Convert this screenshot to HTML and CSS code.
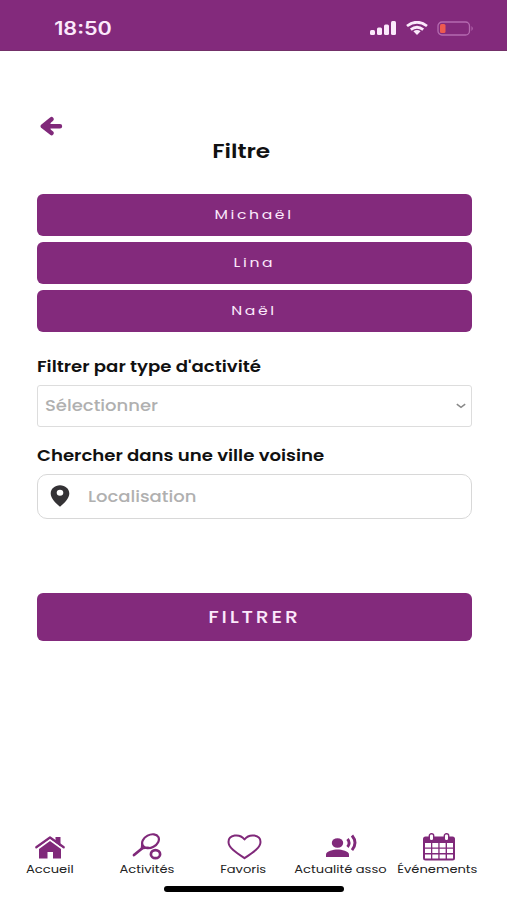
FILE: index.html
```html
<!DOCTYPE html>
<html lang="fr">

<head>
    <meta charset="UTF-8">
    <meta name="viewport" content="width=device-width, initial-scale=1.0">
    <title>Filtre</title>
    <link rel="stylesheet" href="styles.css">
</head>

<body>
    <header class="status">
        <span class="wide time">18:50</span>
        <div class="status-icons">
            <svg width="27" height="14" viewBox="0 0 27 14" fill="#fbe9fb">
                <rect x="0" y="9" width="5" height="5" rx="1.5" />
                <rect x="7" y="6.500" width="5" height="7.500" rx="1.500" />
                <rect x="14" y="3.500" width="5" height="10.500" rx="1.500" />
                <rect x="21" y="0" width="5" height="14" rx="1.500" />
            </svg>
            <svg width="22" height="14" viewBox="0 0 22 14" fill="none" stroke="#fbe9fb" stroke-width="2.800">
                <path d="M1 5Q11 -2.500 21 5" />
                <path d="M4.800 8.600Q11 3.800 17.200 8.600" />
                <path d="M7.400 10.300Q11 7.800 14.600 10.300L11 14z" fill="#fbe9fb" stroke="none" />
            </svg>
            <svg width="37" height="15" viewBox="0 0 37 15">
                <rect x="1" y="1" width="31.500" height="13" rx="4" fill="none" stroke="#b56bb0" stroke-width="1.300" />
                <rect x="3" y="3" width="5.500" height="9" rx="1.500" fill="#ee5a50" />
                <path d="M34.500 5q2.500 2.500 0 5z" fill="#b56bb0" />
            </svg>
        </div>
    </header>

    <main class="container">
        <a href="#" class="back" aria-label="Retour">
            <svg width="24" height="20" viewBox="0 0 24 20" fill="none" stroke="#80297a" stroke-width="4.400" stroke-linecap="round" stroke-linejoin="round">
                <path d="M12.500 3.200L3.800 10.300l8.700 6.800M5 10.300h16" />
                <path d="M11 6v8.600l-6-4.300z" fill="#80297a" stroke-width="1" />
            </svg>
        </a>
        <h1><span class="wide">Filtre</span></h1>

        <div class="children">
            <button type="button" class="child"><span class="wide">Michaël</span></button>
            <button type="button" class="child"><span class="wide">Lina</span></button>
            <button type="button" class="child"><span class="wide">Naël</span></button>
        </div>

        <form>
            <div class="label"><span class="wide left">Filtrer par type d'activité</span></div>
            <div class="select">
                <span class="wide left">Sélectionner</span>
                <svg width="10" height="6" viewBox="0 0 10 6" fill="none" stroke="#888" stroke-width="1.500">
                    <path d="M.8 1.200L5 4.400 9.200 1.200" />
                </svg>
            </div>
            <div class="label city"><span class="wide left">Chercher dans une ville voisine</span></div>
            <div class="search">
                <svg width="20" height="22" viewBox="0 0 20 22">
                    <path fill="#343235" fill-rule="evenodd" d="M10 .3C4.700 .3 .7 3.900 .7 8.500.7 13.200 5.500 18 10 21.800 14.500 18 19.300 13.200 19.300 8.500 19.300 3.900 15.300.3 10 .3zM10 4.700a3.300 3 0 1 1 0 6 3.300 3 0 0 1 0-6z" />
                </svg>
                <span class="wide left">Localisation</span>
            </div>
            <button type="button" class="submit"><span class="wide">FILTRER</span></button>
        </form>
    </main>

    <nav class="tabs">
        <a href="#" class="tab">
            <svg width="32" height="28" viewBox="0 0 32 28" fill="#80297a">
                <path d="M16 8L27 16V25.500h-8V19h-5.500v6.500H5V16z" />
                <path d="M21.500 4h5v9.500l-5-4z" />
                <path d="M2.300 14.300L16 4.500 29.700 14.300" fill="none" stroke="#80297a" stroke-width="2.300" stroke-linecap="round" stroke-linejoin="round" />
                <path d="M3.500 15.700L16 6.800 28.500 15.700" fill="none" stroke="#fff" stroke-width=".6" />
            </svg>
            <span class="wide">Accueil</span>
        </a>
        <a href="#" class="tab">
            <svg width="32" height="28" viewBox="0 0 32 28" fill="none" stroke="#80297a" stroke-width="2.200" stroke-linecap="round" stroke-linejoin="round">
                <ellipse cx="19.500" cy="8.200" rx="8.900" ry="6.300" transform="rotate(-28 19.500 8.200)" />
                <path d="M11.200 11l-.4 4.500 6.200-1" />
                <path d="M3 22l8-6.500" stroke-width="2.800" />
                <ellipse cx="24.500" cy="21.200" rx="4.600" ry="4" stroke-width="2.700" />
            </svg>
            <span class="wide">Activités</span>
        </a>
        <a href="#" class="tab">
            <svg width="36" height="28" viewBox="0 0 36 28" fill="none" stroke="#80297a" stroke-width="2" stroke-linejoin="round">
                <path d="M18.500 25.200C9 19 2.500 14.500 2.500 9 2.500 1.800 13.500 0 18.500 6.500 23.500 0 34.500 1.800 34.500 9 34.500 14.500 28 19 18.500 25.200z" />
            </svg>
            <span class="wide">Favoris</span>
        </a>
        <a href="#" class="tab">
            <svg width="32" height="28" viewBox="0 0 32 28" fill="#80297a">
                <ellipse cx="12.500" cy="10" rx="5.700" ry="4.800" />
                <path d="M1 24V21.500c0-3.500 7.500-5 11.500-5s11.500 1.500 11.500 5v2.500z" />
                <path d="M22.500 6q3.300 4 0 8M27 2.500q6 7.300 0 14.600" fill="none" stroke="#80297a" stroke-width="2.900" />
            </svg>
            <span class="wide">Actualité asso</span>
        </a>
        <a href="#" class="tab events">
            <svg width="36" height="28" viewBox="0 0 36 28">
                <rect x="3" y="3.500" width="32" height="24" rx="2.500" fill="#80297a" />
                <path fill="#fff" d="M5 10h6v4.400H5zM12.300 10h6v4.400h-6zM19.600 10h6v4.400h-6zM27 10h6v4.400h-6zM5 15.700h6v4.400H5zM12.300 15.700h6v4.400h-6zM19.600 15.700h6v4.400h-6zM27 15.700h6v4.400h-6zM5 21.400h6v4.200H5zM12.300 21.400h6v4.200h-6zM19.600 21.400h6v4.200h-6zM27 21.400h6v4.200h-6z" />
                <rect x="9.300" y=".8" width="4.400" height="7" rx="2" fill="#fff" stroke="#80297a" stroke-width="1.400" />
                <rect x="24.300" y=".8" width="4.400" height="7" rx="2" fill="#fff" stroke="#80297a" stroke-width="1.400" />
            </svg>
            <span class="wide">Événements</span>
        </a>
    </nav>
    <div class="home-bar"></div>
</body>

</html>
```
FILE: styles.css
```css
* {
    box-sizing: border-box;
}

body {
    margin: 0;
    height: 900px;
    display: flex;
    flex-direction: column;
    overflow: hidden;
    background-color: white;
    color: #111;
    font-family: "Poppins", "Inter", sans-serif;
    font-feature-settings: "cv11";
}

/* extended lettering */
.wide {
    display: inline-block;
    white-space: nowrap;
    transform: scaleX(1.2);
}

.left {
    transform-origin: left;
}

.status {
    height: 51px;
    flex-shrink: 0;
    display: flex;
    justify-content: space-between;
    align-items: center;
    padding: 6px 33px 0 59px;
    background-color: #832a7c;
    border-bottom: 1px solid #733068;
}

.time {
    color: #fbe9fb;
    font-family: "Inter", sans-serif;
    font-size: 18px;
    font-weight: 600;
}

.status-icons {
    display: flex;
    align-items: center;
    gap: 9px;
}

.container {
    padding: 65px 35.5px 0 36.5px;
}

.back {
    display: block;
    height: 20px;
    padding-left: 2px;
}

.back svg {
    display: block;
}

h1 {
    margin: 4px 0 0;
    padding-right: 26px;
    height: 24px;
    line-height: 24px;
    font-size: 19.4px;
    font-weight: 600;
    text-align: center;
}

.children {
    display: flex;
    flex-direction: column;
    gap: 5.5px;
    margin-top: 29.5px;
}

button {
    display: flex;
    justify-content: center;
    align-items: center;
    width: 100%;
    padding: 0;
    border: none;
    border-radius: 6px;
    background-color: #832a7c;
    color: #fbe9fb;
    font-family: inherit;
    font-feature-settings: inherit;
}

.child {
    height: 42.5px;
    font-size: 13px;
    letter-spacing: 2.2px;
}

.label {
    height: 20px;
    margin-top: 24.5px;
    line-height: 20px;
    font-size: 15.1px;
    font-weight: 600;
}

.city {
    margin-top: 18.5px;
}

.select {
    display: flex;
    align-items: center;
    justify-content: space-between;
    height: 42.5px;
    margin-top: 8px;
    padding: 0 5px 0 7px;
    border: 1px solid #ddd;
    border-radius: 3px;
    color: #b0b0b0;
    font-size: 15px;
    font-weight: 500;
}

.search {
    display: flex;
    align-items: center;
    gap: 18px;
    height: 45px;
    margin-top: 8px;
    padding-left: 12px;
    border: 1px solid #d8d8d8;
    border-radius: 10px;
    color: #b0b0b0;
    font-size: 15px;
    font-weight: 500;
}

.submit {
    height: 48px;
    margin-top: 74.5px;
    padding-bottom: 1px;
    font-size: 17px;
    font-weight: 500;
    letter-spacing: 2.3px;
}

.tabs {
    display: grid;
    grid-template-columns: repeat(5, 97px);
    margin-top: auto;
    padding-left: 1px;
}

.tab {
    display: flex;
    flex-direction: column;
    align-items: center;
    color: #222;
    font-size: 10.9px;
    line-height: 17px;
    text-decoration: none;
}

.home-bar {
    width: 180px;
    height: 6px;
    margin: 8.5px 0 8px 164px;
    flex-shrink: 0;
    border-radius: 3px;
    background-color: #000;
}
```
